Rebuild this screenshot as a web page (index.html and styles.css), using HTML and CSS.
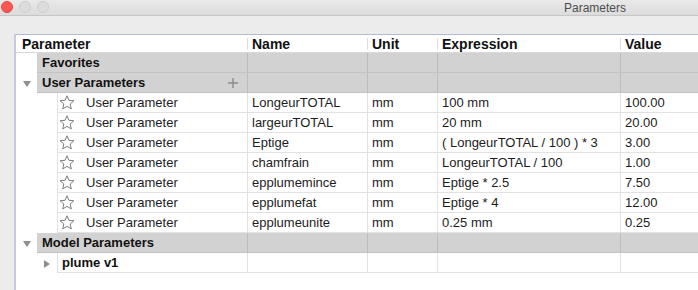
FILE: index.html
```html
<!DOCTYPE html>
<html>
<head>
<meta charset="utf-8">
<link rel="stylesheet" href="styles.css">
</head>
<body>
<div class="window">
  <div class="titlebar">
    <span class="light red"></span>
    <span class="light"></span>
    <span class="light"></span>
    <span class="title">Parameters</span>
  </div>
  <div class="content">
    <div class="table">
      <div class="head">
        <div class="hc c1">Parameter</div>
        <div class="hc">Name</div>
        <div class="hc">Unit</div>
        <div class="hc">Expression</div>
        <div class="hc">Value</div>
      </div>

      <div class="row group">
        <div class="gutter g1"></div>
        <div class="cells gcells">
          <div class="cell first">Favorites</div>
          <div class="cell"></div><div class="cell"></div><div class="cell"></div><div class="cell"></div>
        </div>
      </div>

      <div class="row group">
        <div class="gutter g1"><span class="tri-down"></span></div>
        <div class="cells gcells">
          <div class="cell first withplus">User Parameters
            <svg class="plus" width="10" height="10" viewBox="0 0 10 10"><path d="M5 0V10M0 5H10" stroke="#8a8a8a" stroke-width="1.4"/></svg>
          </div>
          <div class="cell"></div><div class="cell"></div><div class="cell"></div><div class="cell"></div>
        </div>
      </div>

      <div class="row data">
        <div class="gutter g2"></div>
        <div class="cells dcells">
          <div class="cell first"><svg class="star" width="16" height="15" viewBox="0 0 16 15"><path d="M8 0.8 L9.95 5.3 L14.9 5.75 L11.15 9 L12.3 13.9 L8 11.35 L3.7 13.9 L4.85 9 L1.1 5.75 L6.05 5.3 Z" fill="none" stroke="#7c7c7c" stroke-width="1" stroke-linejoin="round"/></svg><span class="pname">User Parameter</span></div>
          <div class="cell">LongeurTOTAL</div><div class="cell">mm</div><div class="cell">100 mm</div><div class="cell">100.00</div>
        </div>
      </div>
      <div class="row data">
        <div class="gutter g2"></div>
        <div class="cells dcells">
          <div class="cell first"><svg class="star" width="16" height="15" viewBox="0 0 16 15"><path d="M8 0.8 L9.95 5.3 L14.9 5.75 L11.15 9 L12.3 13.9 L8 11.35 L3.7 13.9 L4.85 9 L1.1 5.75 L6.05 5.3 Z" fill="none" stroke="#7c7c7c" stroke-width="1" stroke-linejoin="round"/></svg><span class="pname">User Parameter</span></div>
          <div class="cell">largeurTOTAL</div><div class="cell">mm</div><div class="cell">20 mm</div><div class="cell">20.00</div>
        </div>
      </div>
      <div class="row data">
        <div class="gutter g2"></div>
        <div class="cells dcells">
          <div class="cell first"><svg class="star" width="16" height="15" viewBox="0 0 16 15"><path d="M8 0.8 L9.95 5.3 L14.9 5.75 L11.15 9 L12.3 13.9 L8 11.35 L3.7 13.9 L4.85 9 L1.1 5.75 L6.05 5.3 Z" fill="none" stroke="#7c7c7c" stroke-width="1" stroke-linejoin="round"/></svg><span class="pname">User Parameter</span></div>
          <div class="cell">Eptige</div><div class="cell">mm</div><div class="cell">( LongeurTOTAL / 100 ) * 3</div><div class="cell">3.00</div>
        </div>
      </div>
      <div class="row data">
        <div class="gutter g2"></div>
        <div class="cells dcells">
          <div class="cell first"><svg class="star" width="16" height="15" viewBox="0 0 16 15"><path d="M8 0.8 L9.95 5.3 L14.9 5.75 L11.15 9 L12.3 13.9 L8 11.35 L3.7 13.9 L4.85 9 L1.1 5.75 L6.05 5.3 Z" fill="none" stroke="#7c7c7c" stroke-width="1" stroke-linejoin="round"/></svg><span class="pname">User Parameter</span></div>
          <div class="cell">chamfrain</div><div class="cell">mm</div><div class="cell">LongeurTOTAL / 100</div><div class="cell">1.00</div>
        </div>
      </div>
      <div class="row data">
        <div class="gutter g2"></div>
        <div class="cells dcells">
          <div class="cell first"><svg class="star" width="16" height="15" viewBox="0 0 16 15"><path d="M8 0.8 L9.95 5.3 L14.9 5.75 L11.15 9 L12.3 13.9 L8 11.35 L3.7 13.9 L4.85 9 L1.1 5.75 L6.05 5.3 Z" fill="none" stroke="#7c7c7c" stroke-width="1" stroke-linejoin="round"/></svg><span class="pname">User Parameter</span></div>
          <div class="cell">epplumemince</div><div class="cell">mm</div><div class="cell">Eptige * 2.5</div><div class="cell">7.50</div>
        </div>
      </div>
      <div class="row data">
        <div class="gutter g2"></div>
        <div class="cells dcells">
          <div class="cell first"><svg class="star" width="16" height="15" viewBox="0 0 16 15"><path d="M8 0.8 L9.95 5.3 L14.9 5.75 L11.15 9 L12.3 13.9 L8 11.35 L3.7 13.9 L4.85 9 L1.1 5.75 L6.05 5.3 Z" fill="none" stroke="#7c7c7c" stroke-width="1" stroke-linejoin="round"/></svg><span class="pname">User Parameter</span></div>
          <div class="cell">epplumefat</div><div class="cell">mm</div><div class="cell">Eptige * 4</div><div class="cell">12.00</div>
        </div>
      </div>
      <div class="row data">
        <div class="gutter g2"></div>
        <div class="cells dcells">
          <div class="cell first"><svg class="star" width="16" height="15" viewBox="0 0 16 15"><path d="M8 0.8 L9.95 5.3 L14.9 5.75 L11.15 9 L12.3 13.9 L8 11.35 L3.7 13.9 L4.85 9 L1.1 5.75 L6.05 5.3 Z" fill="none" stroke="#7c7c7c" stroke-width="1" stroke-linejoin="round"/></svg><span class="pname">User Parameter</span></div>
          <div class="cell">epplumeunite</div><div class="cell">mm</div><div class="cell">0.25 mm</div><div class="cell">0.25</div>
        </div>
      </div>

      <div class="row group">
        <div class="gutter g1"><span class="tri-down"></span></div>
        <div class="cells gcells">
          <div class="cell first">Model Parameters</div>
          <div class="cell"></div><div class="cell"></div><div class="cell"></div><div class="cell"></div>
        </div>
      </div>

      <div class="row data">
        <div class="gutter g2 gright"><span class="tri-right"></span></div>
        <div class="cells dcells">
          <div class="cell first bold">plume v1</div>
          <div class="cell"></div><div class="cell"></div><div class="cell"></div><div class="cell"></div>
        </div>
      </div>
    </div>
  </div>
</div>
</body>
</html>
```

FILE: styles.css
```css
* { box-sizing: border-box; }

html, body {
  margin: 0;
  padding: 0;
  width: 698px;
  height: 290px;
  overflow: hidden;
  background: #ececec;
  font-family: "Liberation Sans", Arial, sans-serif;
  font-size: 13px;
  color: #1c1c1c;
}

.window {
  width: 698px;
  height: 290px;
  display: flex;
  flex-direction: column;
}

.titlebar {
  height: 16px;
  flex: none;
  display: flex;
  align-items: flex-start;
  gap: 6px;
  padding: 1px 0 0 1px;
  background: linear-gradient(#e9e9e9, #dcdcdc);
  border-bottom: 1px solid #c6c6c6;
}

.light {
  width: 12px;
  height: 12px;
  border-radius: 50%;
  background: #dcdcdc;
  border: 1px solid #cdcdcd;
  flex: none;
}

.light.red {
  background: #fc5753;
  border-color: #df4744;
}

.title {
  margin-left: auto;
  padding-right: 72px;
  font-size: 12px;
  line-height: 14px;
  color: #4d4d4d;
}

.content {
  flex: 1;
  padding: 18px 0 0 14px;
  display: flex;
  min-height: 0;
}

.table {
  flex: 1;
  background: #ffffff;
  border-left: 2px solid #c6cbe0;
  border-top: 1px solid #b3bad6;
  display: flex;
  flex-direction: column;
}

.head {
  height: 18px;
  display: grid;
  grid-template-columns: 231px 120px 70px 183px 1fr;
  align-items: center;
  border-bottom: 1px solid #d9d9d9;
  flex: none;
}

.hc {
  height: 12px;
  display: flex;
  align-items: center;
  padding-left: 4px;
  border-left: 1px solid #dedede;
  font-weight: bold;
  font-size: 14px;
  color: #111;
  white-space: nowrap;
}

.hc.c1 {
  border-left: none;
  padding-left: 6px;
}

.row {
  display: flex;
  height: 20px;
  flex: none;
}

.gutter {
  flex: none;
  height: 20px;
  display: flex;
  align-items: center;
}

.g1 {
  width: 21px;
  padding-left: 7px;
}

.g2 {
  width: 41px;
}

.gright {
  padding-left: 28px;
}

.cells {
  flex: 1;
  display: grid;
  height: 20px;
}

.gcells {
  grid-template-columns: 210px 120px 70px 183px 1fr;
  background: #d2d2d2;
  border-bottom: 1px solid #c3c3c3;
}

.dcells {
  grid-template-columns: 190px 120px 70px 183px 1fr;
  border-bottom: 1px solid #e2e2e2;
}

.cell {
  display: flex;
  align-items: center;
  padding-left: 4px;
  border-left: 1px solid #e2e2e2;
  white-space: nowrap;
  overflow: hidden;
}

.gcells .cell {
  border-left-color: #bdbdbd;
}

.gcells .cell.first {
  border-left: none;
  padding-left: 5px;
  font-weight: bold;
  color: #111;
}

.withplus {
  justify-content: space-between;
  padding-right: 9px;
}

.dcells .cell.first {
  padding-left: 1px;
}

.dcells .cell.first.bold {
  padding-left: 4px;
  font-weight: bold;
  color: #111;
}

.star {
  flex: none;
  margin-right: 11px;
}

.tri-down {
  width: 0;
  height: 0;
  border-left: 4px solid transparent;
  border-right: 4px solid transparent;
  border-top: 6px solid #8e8e8e;
  margin-top: 1px;
}

.tri-right {
  width: 0;
  height: 0;
  border-top: 4px solid transparent;
  border-bottom: 4px solid transparent;
  border-left: 6px solid #8e8e8e;
  margin-top: 1px;
}
```
